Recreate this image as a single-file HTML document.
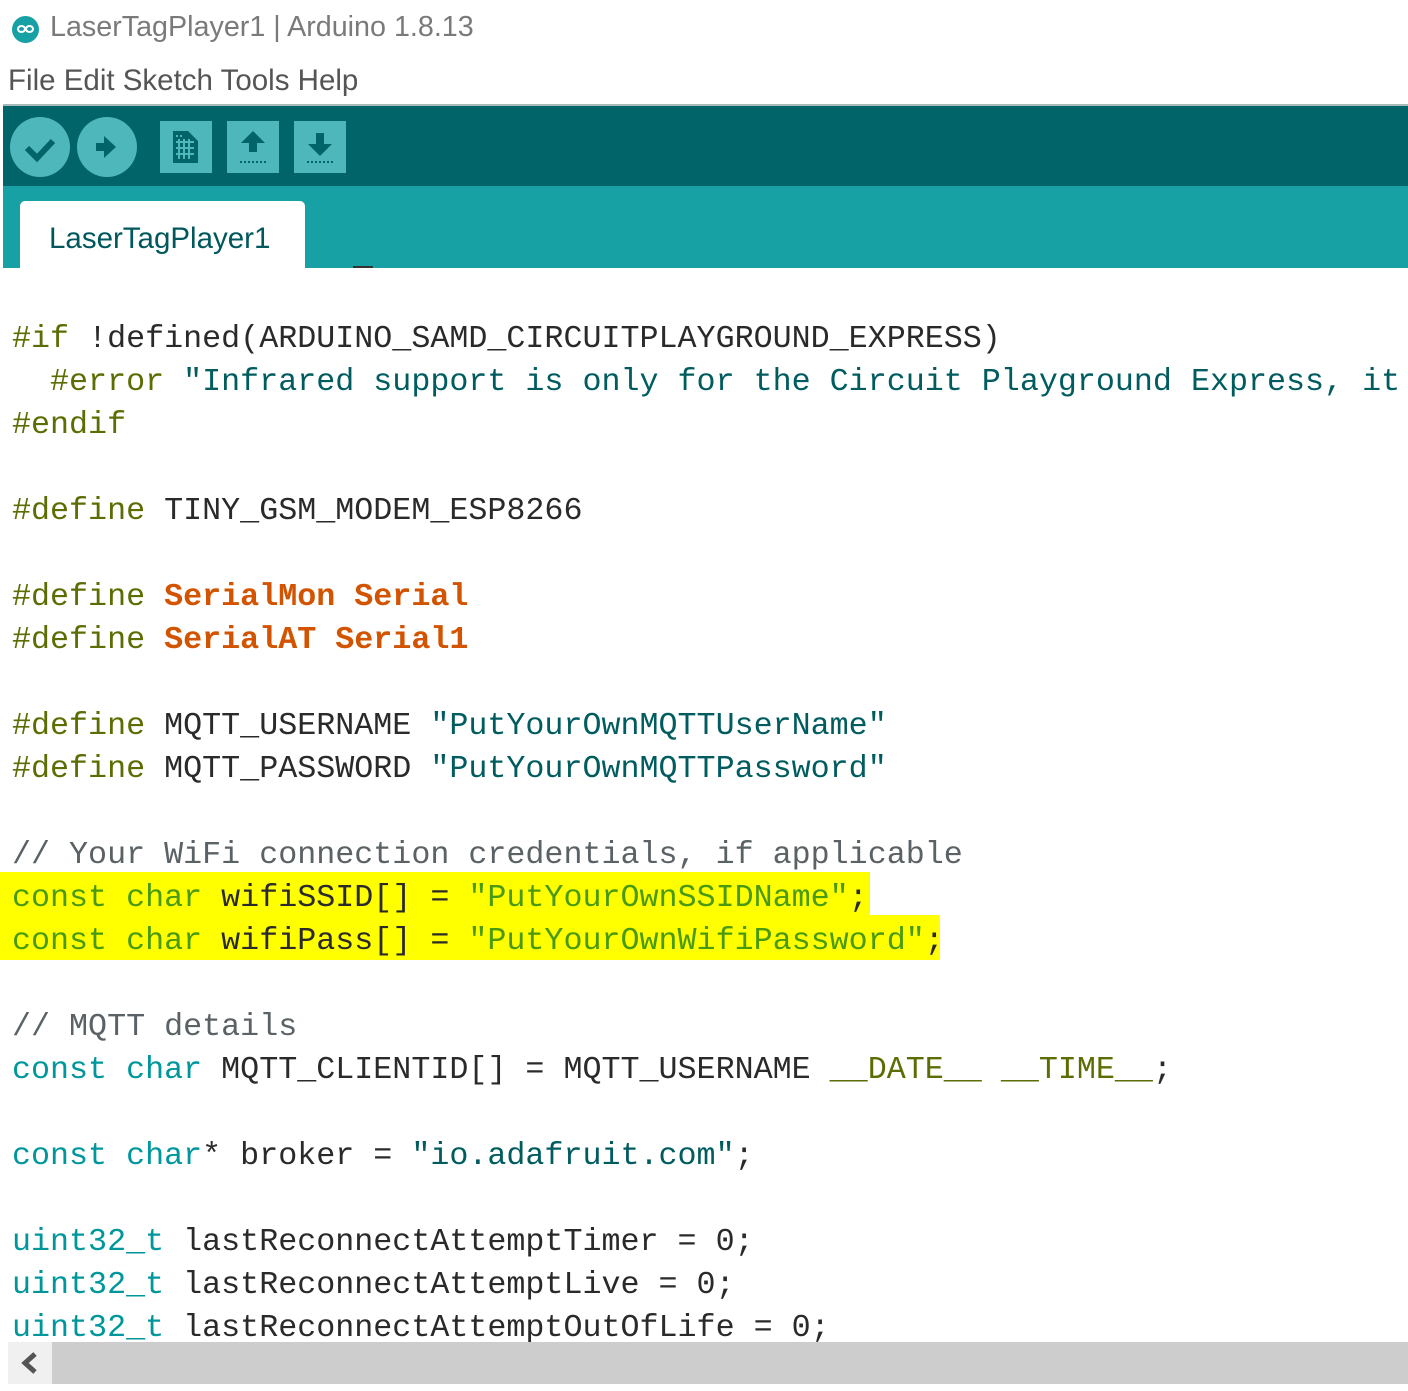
<!DOCTYPE html>
<html><head><meta charset="utf-8"><style>
*{margin:0;padding:0;box-sizing:border-box}
body{width:1408px;height:1391px;background:#fff;position:relative;overflow:hidden;font-family:"Liberation Sans",sans-serif}
.abs{position:absolute}
pre{position:absolute;left:12px;top:318px;font-family:"Liberation Mono",monospace;font-size:31.7px;line-height:43px;color:#2a2a2a;white-space:pre;letter-spacing:0}
.k{color:#5e6d03}.o{color:#d35400;font-weight:bold}.t{color:#00979c}.s{color:#005c5f}.c{color:#5a6266}.g{color:#4a9a10}
.btn{position:absolute;background:#4db7bb}
</style></head><body>
<div class="abs" style="left:12px;top:16px;width:27px;height:27px;border-radius:50%;background:#17a1a5"></div>
<div class="abs" style="left:17px;top:25px;width:9px;height:8px;border:2px solid #fff;border-radius:50%"></div>
<div class="abs" style="left:25px;top:25px;width:9px;height:8px;border:2px solid #fff;border-radius:50%"></div>
<div class="abs" style="left:50px;top:11px;font-size:28.7px;color:#7a7a7a">LaserTagPlayer1 | Arduino 1.8.13</div>
<div class="abs" style="left:8px;top:64px;font-size:29.5px;color:#555">File Edit Sketch Tools Help</div>
<div class="abs" style="left:3px;top:104px;width:1405px;height:2px;background:#a9b8ba"></div>
<div class="abs" style="left:3px;top:106px;width:1405px;height:80px;background:#006468"></div>
<div class="btn" style="left:10px;top:117px;width:60px;height:60px;border-radius:50%"></div>
<div class="btn" style="left:77px;top:117px;width:60px;height:60px;border-radius:50%"></div>
<svg class="abs" style="left:10px;top:117px" width="130" height="60"><path d="M17 31 L27 41 L43 24" stroke="#006468" stroke-width="6" fill="none"/><path d="M86 26 h8 v-7 l12 11 -12 11 v-7 h-8z" fill="#006468"/></svg>
<div class="btn" style="left:160px;top:121px;width:52px;height:52px"></div>
<div class="btn" style="left:227px;top:121px;width:52px;height:52px"></div>
<div class="btn" style="left:294px;top:121px;width:52px;height:52px"></div>
<svg class="abs" style="left:160px;top:121px" width="190" height="52"><path d="M13 10 h15 l10 10 v22 h-25z" fill="#006468"/><g fill="#4db7bb"><rect x="16" y="14" width="2" height="2"/><rect x="20" y="14" width="2" height="2"/><rect x="16" y="20" width="18" height="2"/><rect x="16" y="26" width="18" height="2"/><rect x="16" y="32" width="18" height="2"/><rect x="18" y="18" width="2" height="20"/><rect x="23" y="18" width="2" height="20"/><rect x="28" y="18" width="2" height="20"/></g>
<path d="M93 10 l-12 12 h8 v9 h8 v-9 h8z" fill="#006468"/><path d="M80 41 h26" stroke="#006468" stroke-width="2" stroke-dasharray="2 2"/>
<path d="M160 35 l-12 -12 h8 v-11 h8 v11 h8z" fill="#006468"/><path d="M147 41 h26" stroke="#006468" stroke-width="2" stroke-dasharray="2 2"/></svg>
<div class="abs" style="left:3px;top:186px;width:1405px;height:82px;background:#17a1a5"></div>
<div class="abs" style="left:20px;top:201px;width:285px;height:67px;background:#fff;border-radius:5px 5px 0 0"></div>
<div class="abs" style="left:49px;top:222px;font-size:29.5px;color:#00585c">LaserTagPlayer1</div>
<div class="abs" style="left:353px;top:266px;width:20px;height:2px;background:#333"></div>
<div class="abs" style="left:0;top:872px;width:870px;height:43px;background:#ffff00"></div>
<div class="abs" style="left:0;top:915px;width:940px;height:45px;background:#ffff00"></div>
<pre><span class="k">#if</span> !defined(ARDUINO_SAMD_CIRCUITPLAYGROUND_EXPRESS)
  <span class="k">#error</span> <span class="s">"Infrared support is only for the Circuit Playground Express, it</span>
<span class="k">#endif</span>

<span class="k">#define</span> TINY_GSM_MODEM_ESP8266

<span class="k">#define</span> <span class="o">SerialMon</span> <span class="o">Serial</span>
<span class="k">#define</span> <span class="o">SerialAT</span> <span class="o">Serial1</span>

<span class="k">#define</span> MQTT_USERNAME <span class="s">"PutYourOwnMQTTUserName"</span>
<span class="k">#define</span> MQTT_PASSWORD <span class="s">"PutYourOwnMQTTPassword"</span>

<span class="c">// Your WiFi connection credentials, if applicable</span>
<span class="g">const</span> <span class="g">char</span> wifiSSID[] = <span class="g">"PutYourOwnSSIDName"</span>;
<span class="g">const</span> <span class="g">char</span> wifiPass[] = <span class="g">"PutYourOwnWifiPassword"</span>;

<span class="c">// MQTT details</span>
<span class="t">const</span> <span class="t">char</span> MQTT_CLIENTID[] = MQTT_USERNAME <span class="k">__DATE__</span> <span class="k">__TIME__</span>;

<span class="t">const</span> <span class="t">char</span>* broker = <span class="s">"io.adafruit.com"</span>;

<span class="t">uint32_t</span> lastReconnectAttemptTimer = 0;
<span class="t">uint32_t</span> lastReconnectAttemptLive = 0;
<span class="t">uint32_t</span> lastReconnectAttemptOutOfLife = 0;</pre>
<div class="abs" style="left:8px;top:1342px;width:1400px;height:42px;background:#f0f0f0"></div>
<div class="abs" style="left:52px;top:1342px;width:1356px;height:42px;background:#cdcdcd"></div>
<svg class="abs" style="left:20px;top:1351px" width="20" height="24"><path d="M15 3 L5 12 L15 21" stroke="#555" stroke-width="5" fill="none"/></svg>
</body></html>
